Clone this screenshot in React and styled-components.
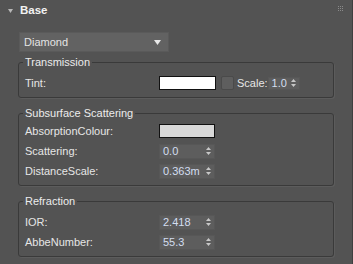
import React from 'react';
import styled, { createGlobalStyle } from 'styled-components';

const GlobalStyle = createGlobalStyle`
  html, body {
    margin: 0;
    padding: 0;
    background: #535353;
  }
  body {
    font-family: "Liberation Sans", Arial, sans-serif;
    font-size: 11px;
    color: #e6e6e6;
  }
`;

const Panel = styled.div`
  width: 353px;
  height: 264px;
  box-sizing: border-box;
  background: #535353;
  border-right: 1px solid #3f3f3f;
  overflow: hidden;
`;

const Header = styled.div`
  position: relative;
  height: 22px;
  display: flex;
  align-items: center;
  padding-left: 8px;
  gap: 7px;
`;

const Title = styled.span`
  font-weight: bold;
  font-size: 11.5px;
  color: #f2f2f2;
  margin-top: -2px;
`;

const Grip = styled.div`
  position: absolute;
  right: 9px;
  top: 6px;
  display: grid;
  grid-template-columns: repeat(3, 1px);
  gap: 1px;
  span {
    width: 1px;
    height: 1px;
    background: #8a8a8a;
  }
`;

const Body = styled.div`
  padding: 10px 18px 0 18px;
`;

const Dropdown = styled.div`
  width: 150px;
  height: 20px;
  box-sizing: border-box;
  margin-left: 1px;
  background: #626262;
  border: 1px solid #5a5a5a;
  display: flex;
  align-items: center;
  justify-content: space-between;
  padding: 0 7px 0 4px;
  color: #e4e4e4;
`;

const Group = styled.fieldset`
  margin: ${(p) => p.$top}px 0 0 0;
  padding: ${(p) => p.$pt}px 0 ${(p) => p.$pb}px 6px;
  border: 1px solid #3a3a3a;
  border-radius: 3px;
  box-shadow: 1px 1px 0 #5c5c5c;
  min-width: 0;
`;

const Legend = styled.legend`
  padding: 0 2px;
  margin-left: -2px;
  line-height: 12px;
  color: #ececec;
`;

const Row = styled.div`
  height: 20px;
  display: flex;
  align-items: center;
`;

const Label = styled.span`
  width: 134px;
  flex: none;
`;

const Swatch = styled.div`
  width: ${(p) => p.$w}px;
  height: 14px;
  box-sizing: border-box;
  border: 1px solid #111;
  background: ${(p) => p.$color};
`;

const Check = styled.div`
  width: 13px;
  height: 14px;
  box-sizing: border-box;
  margin-left: 5px;
  border: 1px solid #4a4a4a;
  border-radius: 2px;
  background: #5e5e5e;
`;

const SmallLabel = styled.span`
  margin-left: 3px;
  margin-right: 0;
`;

const Spin = styled.div`
  width: ${(p) => p.$w}px;
  height: ${(p) => p.$h}px;
  box-sizing: border-box;
  background: #5d5d5d;
  border: 1px solid #575757;
  display: flex;
  align-items: center;
  justify-content: space-between;
  padding: 0 3px 0 3px;
  color: #d3def0;
`;

const Arrows = ({ color = '#c8c8c8' }) => (
  <svg width="5" height="8" viewBox="0 0 5 8">
    <path d="M2.5 0 L5 3 L0 3 Z" fill={color} />
    <path d="M0 5 L5 5 L2.5 8 Z" fill={color} />
  </svg>
);

const Spinner = ({ value, w = 56, h = 15 }) => (
  <Spin $w={w} $h={h}>
    <span>{value}</span>
    <Arrows />
  </Spin>
);

export default function App() {
  return (
    <Panel>
      <GlobalStyle />
      <Header>
        <svg width="5" height="4" viewBox="0 0 5 4">
          <path d="M0 0 L5 0 L2.5 4 Z" fill="#b8b8b8" />
        </svg>
        <Title>Base</Title>
        <Grip>
          {Array.from({ length: 9 }).map((_, i) => (
            <span key={i} />
          ))}
        </Grip>
      </Header>
      <Body>
        <Dropdown>
          <span>Diamond</span>
          <svg width="7" height="5" viewBox="0 0 7 5">
            <path d="M0 0 L7 0 L3.5 5 Z" fill="#e8e8e8" />
          </svg>
        </Dropdown>

        <Group $top={4} $pt={5} $pb={4}>
          <Legend>Transmission</Legend>
          <Row>
            <Label>Tint:</Label>
            <Swatch $w={57} $color="#ffffff" />
            <Check />
            <SmallLabel>Scale:</SmallLabel>
            <Spinner value="1.0" w={32} h={13} />
          </Row>
        </Group>

        <Group $top={9} $pt={2} $pb={4}>
          <Legend>Subsurface Scattering</Legend>
          <Row>
            <Label>AbsorptionColour:</Label>
            <Swatch $w={56} $color="#d8d8d8" />
          </Row>
          <Row>
            <Label>Scattering:</Label>
            <Spinner value="0.0" />
          </Row>
          <Row>
            <Label>DistanceScale:</Label>
            <Spinner value="0.363m" />
          </Row>
        </Group>

        <Group $top={9} $pt={5} $pb={4}>
          <Legend>Refraction</Legend>
          <Row>
            <Label>IOR:</Label>
            <Spinner value="2.418" />
          </Row>
          <Row>
            <Label>AbbeNumber:</Label>
            <Spinner value="55.3" />
          </Row>
        </Group>
      </Body>
    </Panel>
  );
}
